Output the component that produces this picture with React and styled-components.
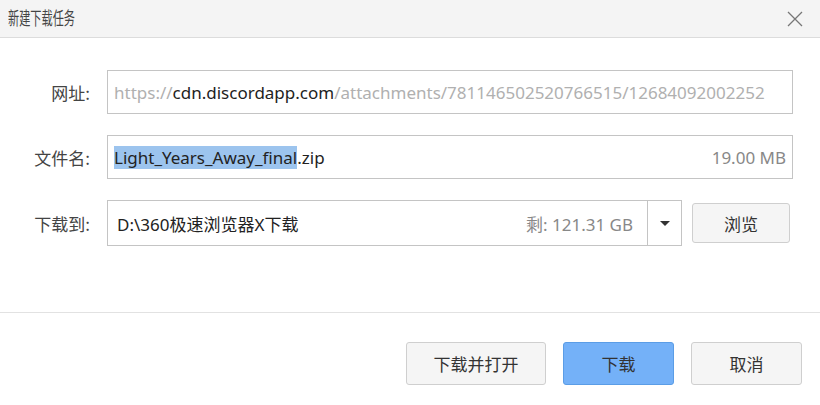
import React from 'react'
import styled, {createGlobalStyle} from 'styled-components'

const GlobalStyle = createGlobalStyle`
  html, body {
    margin: 0;
    padding: 0;
    background: #ffffff;
  }
  body {
    font-family: "Noto Sans", "Noto Sans CJK SC", sans-serif;
    color: #333;
  }
`;

const Dialog = styled.div`
  width: 820px;
  height: 405px;
  display: flex;
  flex-direction: column;
  background: #fff;
  overflow: hidden;
`;

const TitleBar = styled.div`
  height: 37px;
  flex: none;
  display: flex;
  align-items: center;
  justify-content: space-between;
  padding: 0 14px 0 8px;
  background: #f4f4f4;
  border-bottom: 1px solid #dcdcdc;
`;

// the title font in the reference is a condensed face
const Title = styled.h1`
  margin: 0 0 3px;
  font-family: "Noto Sans CJK SC", sans-serif;
  font-size: 18px;
  font-weight: 400;
  color: #444;
  transform: scaleX(0.62);
  transform-origin: left center;
`;

const CloseButton = styled.button`
  width: 22px;
  height: 22px;
  padding: 0;
  border: 0;
  background: none;
  display: flex;
  align-items: center;
  justify-content: center;
`;

const Form = styled.div`
  flex: 1;
  display: flex;
  flex-direction: column;
  gap: 21px;
  padding: 32px 27px 0 0;
`;

const Row = styled.div`
  display: flex;
  align-items: center;
  gap: 17px;
`;

const Label = styled.label`
  width: 90px;
  flex: none;
  text-align: right;
  font-family: "Noto Sans CJK SC", sans-serif;
  font-size: 17px;
  color: #444;
`;

const Field = styled.div`
  flex: 1;
  min-width: 0;
  height: 42px;
  display: flex;
  align-items: center;
  gap: 12px;
  padding: 0 6px;
  border: 1px solid #c4c4c4;
  font-size: 17px;
  white-space: nowrap;
  overflow: hidden;
`;

const Value = styled.span`
  flex: 1;
  min-width: 0;
  overflow: hidden;
  color: #222;
`;

const Dim = styled.span`
  color: #b0b0b0;
`;

const Selected = styled.span`
  background: #9cc4ee;
  color: #222;
  padding: 2px 0;
`;

const Meta = styled.span`
  flex: none;
  color: #888;
`;

const PathGroup = styled.div`
  flex: 1;
  display: flex;
  min-width: 0;
  height: 44px;
  border: 1px solid #c4c4c4;
`;

const PathField = styled(Field)`
  border: 0;
  height: auto;
  padding: 0 14px 0 9px;
`;

const DropToggle = styled.button`
  width: 34px;
  flex: none;
  border: 0;
  border-left: 1px solid #c4c4c4;
  background: #fff;
  padding: 0;
  display: flex;
  align-items: center;
  justify-content: center;

  &::after {
    content: '';
    border-left: 5px solid transparent;
    border-right: 5px solid transparent;
    border-top: 5px solid #333;
  }
`;

const Button = styled.button`
  height: ${p => p.$h || 43}px;
  width: ${p => p.$w}px;
  flex: none;
  border-radius: 3px;
  border: 1px solid ${p => p.$primary ? '#5b9de6' : '#cfcfcf'};
  background: ${p => p.$primary ? '#74b1f8' : '#f5f5f5'};
  font-family: "Noto Sans CJK SC", sans-serif;
  font-size: 17px;
  color: #333;
  padding: 0;
`;

const BrowseButton = styled(Button)`
  margin: 0 3px 0 -7px;
`;

const Footer = styled.div`
  flex: none;
  height: 93px;
  display: flex;
  justify-content: flex-end;
  align-items: flex-start;
  gap: 17px;
  padding: 29px 18px 0 0;
  border-top: 1px solid #e2e2e2;
  box-sizing: border-box;
`;

export default function App() {
  return (
    <Dialog>
      <GlobalStyle/>
      <TitleBar>
        <Title>新建下载任务</Title>
        <CloseButton aria-label="关闭">
          <svg width="16" height="16" viewBox="0 0 16 16">
            <path d="M1 1 L15 15 M15 1 L1 15" stroke="#777" strokeWidth="1.3" fill="none"/>
          </svg>
        </CloseButton>
      </TitleBar>
      <Form>
        <Row>
          <Label>网址:</Label>
          <Field>
            <Value>
              <Dim>https://</Dim>cdn.discordapp.com<Dim>/attachments/781146502520766515/12684092002252</Dim>
            </Value>
          </Field>
        </Row>
        <Row>
          <Label>文件名:</Label>
          <Field>
            <Value><Selected>Light_Years_Away_final</Selected>.zip</Value>
            <Meta>19.00 MB</Meta>
          </Field>
        </Row>
        <Row>
          <Label>下载到:</Label>
          <PathGroup>
            <PathField>
              <Value>D:\360极速浏览器X下载</Value>
              <Meta>剩: 121.31 GB</Meta>
            </PathField>
            <DropToggle aria-label="选择目录"/>
          </PathGroup>
          <BrowseButton $w={98} $h={40}>浏览</BrowseButton>
        </Row>
      </Form>
      <Footer>
        <Button $w={140}>下载并打开</Button>
        <Button $w={111} $primary>下载</Button>
        <Button $w={111}>取消</Button>
      </Footer>
    </Dialog>
  )
}
